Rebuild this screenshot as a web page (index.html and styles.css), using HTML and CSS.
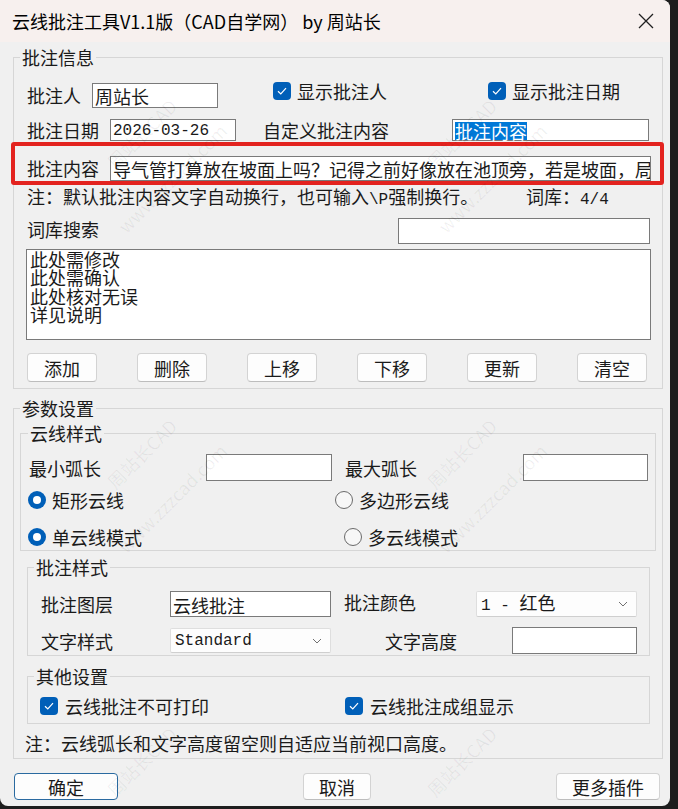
FILE: index.html
```html
<!DOCTYPE html>
<html lang="zh-CN">
<head>
<meta charset="utf-8">
<title>云线批注工具</title>
<link rel="stylesheet" href="styles.css">
</head>
<body>
<div class="window">
  <div class="titlebar">
    <span class="title">云线批注工具V1.1版（CAD自学网） by 周站长</span>
    <svg class="close" width="16" height="16" viewBox="0 0 16 16"><path d="M1 1 L15 15 M15 1 L1 15" stroke="#1f1f1f" stroke-width="1.3" fill="none"/></svg>
  </div>

  <fieldset class="group g-info">
    <legend>批注信息</legend>
    <div class="gbody">
      <div class="row r1">
        <span class="lbl" style="width:65px">批注人</span>
        <div class="field" style="width:126px;height:25px">周站长</div>
        <div class="check" style="margin-left:55px;width:215px">
          <span class="cb"><svg width="12" height="12" viewBox="0 0 12 12"><path d="M2 6.3 L4.8 9 L10 3.2" stroke="#fff" stroke-width="1.2" fill="none"/></svg></span>
          <span>显示批注人</span>
        </div>
        <div class="check">
          <span class="cb"><svg width="12" height="12" viewBox="0 0 12 12"><path d="M2 6.3 L4.8 9 L10 3.2" stroke="#fff" stroke-width="1.2" fill="none"/></svg></span>
          <span>显示批注日期</span>
        </div>
      </div>

      <div class="row r2">
        <span class="lbl" style="width:83px">批注日期</span>
        <div class="field mono" style="width:126px;height:22px">2026-03-26</div>
        <span class="lbl" style="margin-left:27px;width:189px">自定义批注内容</span>
        <div class="field" style="width:197px;height:22px"><span class="sel">批注内容</span></div>
      </div>

      <div class="row marked">
        <span class="lbl" style="width:83px">批注内容</span>
        <div class="field clip" style="width:541px;height:25px">导气管打算放在坡面上吗？记得之前好像放在池顶旁，若是坡面，局</div>
      </div>

      <div class="row note">
        <span class="lbl" style="width:499px">注：默认批注内容文字自动换行，也可输入<span class="mono">\P</span>强制换行。</span>
        <span class="lbl">词库：<span class="mono">4/4</span></span>
      </div>

      <div class="row search">
        <span class="lbl lbl-up" style="width:371px">词库搜索</span>
        <div class="field" style="width:252px;height:26px"></div>
      </div>

      <div class="listbox">
        <div>此处需修改</div>
        <div>此处需确认</div>
        <div>此处核对无误</div>
        <div>详见说明</div>
      </div>

      <div class="row buttons">
        <button class="btn">添加</button>
        <button class="btn">删除</button>
        <button class="btn">上移</button>
        <button class="btn">下移</button>
        <button class="btn">更新</button>
        <button class="btn">清空</button>
      </div>
    </div>
  </fieldset>

  <fieldset class="group g-param">
    <legend>参数设置</legend>
    <div class="gbody">
      <fieldset class="group sub s-cloud">
        <legend>云线样式</legend>
        <div class="gbody">
          <div class="row arc">
            <span class="lbl" style="width:177px">最小弧长</span>
            <div class="field" style="width:126px;height:27px"></div>
            <span class="lbl" style="margin-left:13px;width:178px">最大弧长</span>
            <div class="field" style="width:125px;height:27px"></div>
          </div>
          <div class="row radios rr1">
            <div class="radio-item" style="width:307px"><span class="rb on"></span><span>矩形云线</span></div>
            <div class="radio-item"><span class="rb"></span><span>多边形云线</span></div>
          </div>
          <div class="row radios rr2">
            <div class="radio-item" style="width:316px"><span class="rb on"></span><span>单云线模式</span></div>
            <div class="radio-item"><span class="rb"></span><span>多云线模式</span></div>
          </div>
        </div>
      </fieldset>

      <fieldset class="group sub s-style">
        <legend>批注样式</legend>
        <div class="gbody">
          <div class="row st1">
            <span class="lbl" style="width:129px">批注图层</span>
            <div class="field" style="width:161px;height:26px">云线批注</div>
            <span class="lbl lbl-up" style="margin-left:13px;width:132px">批注颜色</span>
            <div class="combo" style="width:161px;height:26px"><span><span class="mono">1 - </span>红色</span><svg width="10" height="6" viewBox="0 0 10 6"><path d="M1 1 L5 5 L9 1" stroke="#707070" stroke-width="1" fill="none"/></svg></div>
          </div>
          <div class="row st2">
            <span class="lbl" style="width:129px">文字样式</span>
            <div class="combo" style="width:161px;height:25px"><span class="mono">Standard</span><svg width="10" height="6" viewBox="0 0 10 6"><path d="M1 1 L5 5 L9 1" stroke="#707070" stroke-width="1" fill="none"/></svg></div>
            <span class="lbl" style="margin-left:54px;width:127px">文字高度</span>
            <div class="field" style="width:125px;height:27px"></div>
          </div>
        </div>
      </fieldset>

      <fieldset class="group sub s-other">
        <legend>其他设置</legend>
        <div class="gbody">
          <div class="row oth">
            <div class="check" style="width:305px">
              <span class="cb"><svg width="12" height="12" viewBox="0 0 12 12"><path d="M2 6.3 L4.8 9 L10 3.2" stroke="#fff" stroke-width="1.2" fill="none"/></svg></span>
              <span>云线批注不可打印</span>
            </div>
            <div class="check">
              <span class="cb"><svg width="12" height="12" viewBox="0 0 12 12"><path d="M2 6.3 L4.8 9 L10 3.2" stroke="#fff" stroke-width="1.2" fill="none"/></svg></span>
              <span>云线批注成组显示</span>
            </div>
          </div>
        </div>
      </fieldset>

      <div class="row note2">
        <span class="lbl">注：云线弧长和文字高度留空则自适应当前视口高度。</span>
      </div>
    </div>
  </fieldset>

  <div class="row footer">
    <button class="btn primary" style="width:104px">确定</button>
    <button class="btn" style="margin-left:185px;width:68px">取消</button>
    <button class="btn" style="margin-left:185px;width:104px">更多插件</button>
  </div>

  <div class="watermarks" aria-hidden="true">
    <span class="wm" style="left:117px;top:172px">周站长CAD</span>
    <span class="wm" style="left:128px;top:236px">www.zzzcad.com</span>
    <span class="wm" style="left:437px;top:172px">周站长CAD</span>
    <span class="wm" style="left:448px;top:236px">www.zzzcad.com</span>
    <span class="wm" style="left:117px;top:492px">周站长CAD</span>
    <span class="wm" style="left:128px;top:556px">www.zzzcad.com</span>
    <span class="wm" style="left:437px;top:492px">周站长CAD</span>
    <span class="wm" style="left:448px;top:556px">www.zzzcad.com</span>
    <span class="wm" style="left:117px;top:800px">周站长CAD</span>
    <span class="wm" style="left:437px;top:800px">周站长CAD</span>
  </div>
</div>
</body>
</html>
```

FILE: styles.css
```css
* { box-sizing: border-box; }

body {
  margin: 0;
  background: #1d1d1d;
  font-family: "Noto Sans CJK SC", "Noto Sans", sans-serif;
  color: #1a1a1a;
}

.window {
  position: relative;
  width: 670px;
  height: 806px;
  background: #f0f0f0;
  border-radius: 0 8px 8px 8px;
  overflow: hidden;
  display: flex;
  flex-direction: column;
}

.titlebar {
  height: 42px;
  flex: none;
  background: #f7f0ee;
  display: flex;
  align-items: center;
  justify-content: space-between;
  padding-left: 12px;
  padding-right: 16px;
  font-size: 18px;
  color: #000;
}

.title { line-height: 24px; }

.close { display: block; margin-top: -1px; }

fieldset.group {
  border: 1px solid #d6d6d6;
  margin: 0;
  padding: 0;
  min-width: 0;
}

fieldset.group > legend {
  font-size: 18px;
  line-height: 20px;
  padding: 0 2px;
  margin-left: 6px;
  color: #1a1a1a;
}

.gbody {
  display: flex;
  flex-direction: column;
}

.g-info {
  margin: 5px 7px 0 13px !important;
}
.g-info > .gbody { padding-bottom: 6px; }

.row {
  display: flex;
  align-items: center;
  flex: none;
}

.lbl {
  font-size: 18px;
  line-height: 20px;
  white-space: nowrap;
  flex: none;
}

.lbl-up { margin-top: -5px; }

.mono {
  font-family: "Liberation Mono", "Noto Sans CJK SC", monospace;
  font-size: 16px;
}

.field {
  flex: none;
  background: #fff;
  border: 1px solid #7a7a7a;
  font-size: 18px;
  line-height: 20px;
  padding: 1px 2px 0 2px;
  display: flex;
  align-items: center;
  white-space: nowrap;
}

.field.clip { overflow: hidden; }

.field.mono { font-size: 16px; }

.sel {
  background: #0078d7;
  color: #fff;
  line-height: 18px;
  height: 18px;
  display: inline-block;
}

.r1 { margin-top: 14px; height: 28px; padding-left: 13px; }
.r1 .check { align-self: flex-start; }

.r2 { margin-top: 10px; height: 22px; padding-left: 13px; }

.marked {
  margin: 1px -2px 0 -3px;
  height: 43px;
  border: 4px solid #e3231f;
  border-radius: 3px;
  padding-left: 12px;
  align-items: flex-end;
}
.marked .lbl { margin-bottom: 3px; }

.note { margin-top: 3px; height: 20px; padding-left: 13px; }

.search { margin-top: 10px; height: 26px; padding-left: 13px; }

.listbox {
  flex: none;
  margin: 5px 0 0 12px;
  width: 625px;
  height: 91px;
  background: #fff;
  border: 1px solid #7a7a7a;
  padding: 0 3px;
  font-size: 18px;
  line-height: 18.3px;
}

.buttons {
  margin-top: 13px;
  height: 29px;
  padding-left: 13px;
  gap: 40px;
}

.btn {
  flex: none;
  width: 70px;
  height: 100%;
  background: #fdfdfd;
  border: 1px solid #d3d3d3;
  border-bottom-color: #bdbdbd;
  border-radius: 4px;
  font-family: "Noto Sans CJK SC", sans-serif;
  font-size: 18px;
  line-height: 20px;
  color: #1a1a1a;
  padding: 0;
}

.check {
  display: flex;
  align-items: center;
  gap: 6px;
  font-size: 18px;
  line-height: 20px;
  flex: none;
}

.cb {
  width: 18px;
  height: 18px;
  border-radius: 4px;
  background: #005fb8;
  display: flex;
  align-items: center;
  justify-content: center;
  flex: none;
}
.cb svg { display: block; }

/* parameters group */
.g-param {
  margin: 9px 7px 0 13px !important;
}
.g-param > .gbody { padding-bottom: 5px; }

.s-cloud { margin: 5px 6px 0 6px !important; }
.s-cloud > legend { margin-left: 7px !important; }
.s-cloud > .gbody { padding-bottom: 2px; }

.arc { margin-top: 11px; height: 27px; padding-left: 8px; }

.radios { height: 22px; padding-left: 7px; }
.rr1 { margin-top: 8px; }
.rr2 { margin-top: 15px; }

.radio-item {
  display: flex;
  align-items: center;
  gap: 6px;
  font-size: 18px;
  line-height: 20px;
  flex: none;
}

.rb {
  width: 18px;
  height: 18px;
  border-radius: 50%;
  border: 1px solid #6a6a6a;
  background: #f7f7f7;
  flex: none;
  display: flex;
  align-items: center;
  justify-content: center;
}
.rb.on {
  border: none;
  background: #005fb8;
}
.rb.on::after {
  content: "";
  width: 8px;
  height: 8px;
  border-radius: 50%;
  background: #fff;
}

.s-style { margin: 6px 12px 0 13px !important; }
.s-style > .gbody { padding-bottom: 1px; }
.st1 { margin-top: 14px; height: 26px; padding-left: 13px; }
.st2 { margin-top: 10px; height: 27px; padding-left: 13px; }

.combo {
  flex: none;
  background: #fdfdfd;
  border: 1px solid #dedede;
  border-bottom-color: #cfcfcf;
  border-radius: 2px;
  display: flex;
  align-items: center;
  justify-content: space-between;
  padding: 0 8px 0 4px;
  font-size: 18px;
  line-height: 20px;
  white-space: nowrap;
}
.combo svg { display: block; }

.s-other { margin: 10px 12px 0 13px !important; }
.s-other > .gbody { padding-bottom: 8px; }
.oth { margin-top: 11px; height: 18px; padding-left: 12px; }
.oth .check { gap: 7px; }

.note2 { margin-top: 9px; height: 20px; padding-left: 11px; }

.footer {
  margin-top: 14px;
  height: 27px;
  padding-left: 14px;
}
.footer .btn { height: 27px; }
.btn.primary {
  border: 1px solid #2a6aa0;
  background: #fdfdfd;
}

/* faint diagonal watermark printed over the dialog */
.watermarks {
  position: absolute;
  inset: 0;
  pointer-events: none;
  overflow: hidden;
}
.wm {
  position: absolute;
  font-family: "Noto Sans CJK SC", sans-serif;
  font-size: 18px;
  line-height: 20px;
  color: rgba(0, 0, 0, 0.06);
  white-space: nowrap;
  transform-origin: 0 100%;
  transform: translateY(-20px) rotate(-45deg);
}
```
